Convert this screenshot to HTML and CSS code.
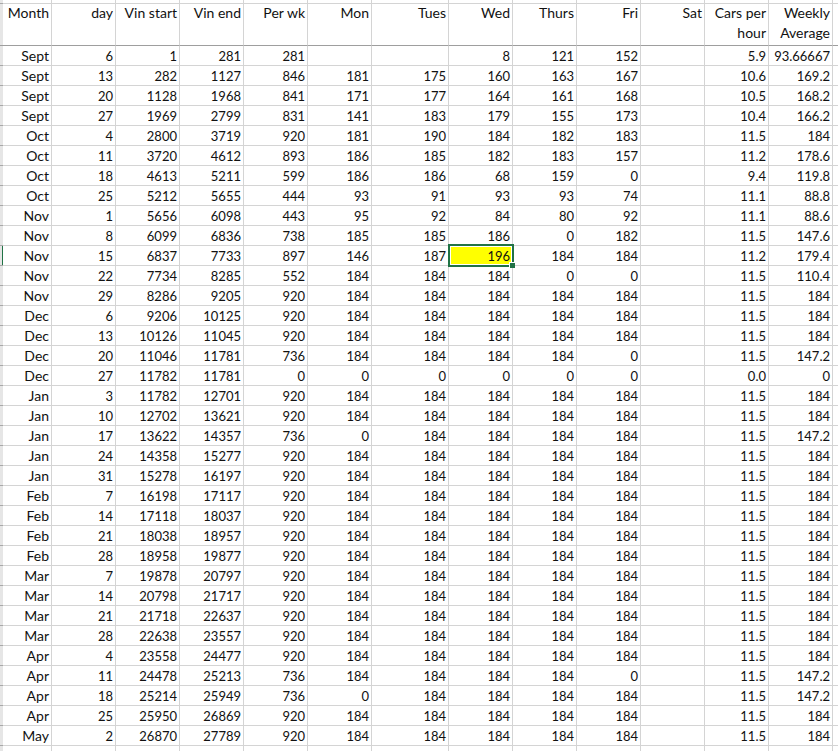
FILE: index.html
```html
<!DOCTYPE html>
<html lang="en">
<head>
<meta charset="utf-8">
<title>Weekly production sheet</title>
<link rel="stylesheet" href="styles.css">
</head>
<body>
<table class="sheet">
<colgroup><col class="c-strip"><col class="c-month"><col class="c-std"><col class="c-std"><col class="c-std"><col class="c-std"><col class="c-std"><col class="c-tues"><col class="c-std"><col class="c-std"><col class="c-std"><col class="c-std"><col class="c-std"><col class="c-std"><col class="c-rest"></colgroup>
<tr class="cap"><th class="strip"></th><th></th><th></th><th></th><th></th><th></th><th></th><th></th><th></th><th></th><th></th><th></th><th></th><th></th><th class="rest"></th></tr>
<tr class="head"><th class="strip"></th><th><div class="label">Month</div></th><th><div class="label">day</div></th><th><div class="label">Vin start</div></th><th><div class="label">Vin end</div></th><th><div class="label">Per wk</div></th><th><div class="label">Mon</div></th><th><div class="label">Tues</div></th><th><div class="label">Wed</div></th><th><div class="label">Thurs</div></th><th><div class="label">Fri</div></th><th><div class="label">Sat</div></th><th><div class="label">Cars per hour</div></th><th><div class="label">Weekly Average</div></th><th class="rest"></th></tr>
<tr><td class="strip"></td><td>Sept</td><td>6</td><td>1</td><td>281</td><td>281</td><td></td><td></td><td>8</td><td>121</td><td>152</td><td></td><td>5.9</td><td>93.66667</td><td class="rest"></td></tr>
<tr><td class="strip"></td><td>Sept</td><td>13</td><td>282</td><td>1127</td><td>846</td><td>181</td><td>175</td><td>160</td><td>163</td><td>167</td><td></td><td>10.6</td><td>169.2</td><td class="rest"></td></tr>
<tr><td class="strip"></td><td>Sept</td><td>20</td><td>1128</td><td>1968</td><td>841</td><td>171</td><td>177</td><td>164</td><td>161</td><td>168</td><td></td><td>10.5</td><td>168.2</td><td class="rest"></td></tr>
<tr><td class="strip"></td><td>Sept</td><td>27</td><td>1969</td><td>2799</td><td>831</td><td>141</td><td>183</td><td>179</td><td>155</td><td>173</td><td></td><td>10.4</td><td>166.2</td><td class="rest"></td></tr>
<tr><td class="strip"></td><td>Oct</td><td>4</td><td>2800</td><td>3719</td><td>920</td><td>181</td><td>190</td><td>184</td><td>182</td><td>183</td><td></td><td>11.5</td><td>184</td><td class="rest"></td></tr>
<tr><td class="strip"></td><td>Oct</td><td>11</td><td>3720</td><td>4612</td><td>893</td><td>186</td><td>185</td><td>182</td><td>183</td><td>157</td><td></td><td>11.2</td><td>178.6</td><td class="rest"></td></tr>
<tr><td class="strip"></td><td>Oct</td><td>18</td><td>4613</td><td>5211</td><td>599</td><td>186</td><td>186</td><td>68</td><td>159</td><td>0</td><td></td><td>9.4</td><td>119.8</td><td class="rest"></td></tr>
<tr><td class="strip"></td><td>Oct</td><td>25</td><td>5212</td><td>5655</td><td>444</td><td>93</td><td>91</td><td>93</td><td>93</td><td>74</td><td></td><td>11.1</td><td>88.8</td><td class="rest"></td></tr>
<tr><td class="strip"></td><td>Nov</td><td>1</td><td>5656</td><td>6098</td><td>443</td><td>95</td><td>92</td><td>84</td><td>80</td><td>92</td><td></td><td>11.1</td><td>88.6</td><td class="rest"></td></tr>
<tr><td class="strip"></td><td>Nov</td><td>8</td><td>6099</td><td>6836</td><td>738</td><td>185</td><td>185</td><td>186</td><td>0</td><td>182</td><td></td><td>11.5</td><td>147.6</td><td class="rest"></td></tr>
<tr><td class="strip active"></td><td>Nov</td><td>15</td><td>6837</td><td>7733</td><td>897</td><td>146</td><td>187</td><td class="selected">196</td><td>184</td><td>184</td><td></td><td>11.2</td><td>179.4</td><td class="rest"></td></tr>
<tr><td class="strip"></td><td>Nov</td><td>22</td><td>7734</td><td>8285</td><td>552</td><td>184</td><td>184</td><td>184</td><td>0</td><td>0</td><td></td><td>11.5</td><td>110.4</td><td class="rest"></td></tr>
<tr><td class="strip"></td><td>Nov</td><td>29</td><td>8286</td><td>9205</td><td>920</td><td>184</td><td>184</td><td>184</td><td>184</td><td>184</td><td></td><td>11.5</td><td>184</td><td class="rest"></td></tr>
<tr><td class="strip"></td><td>Dec</td><td>6</td><td>9206</td><td>10125</td><td>920</td><td>184</td><td>184</td><td>184</td><td>184</td><td>184</td><td></td><td>11.5</td><td>184</td><td class="rest"></td></tr>
<tr><td class="strip"></td><td>Dec</td><td>13</td><td>10126</td><td>11045</td><td>920</td><td>184</td><td>184</td><td>184</td><td>184</td><td>184</td><td></td><td>11.5</td><td>184</td><td class="rest"></td></tr>
<tr><td class="strip"></td><td>Dec</td><td>20</td><td>11046</td><td>11781</td><td>736</td><td>184</td><td>184</td><td>184</td><td>184</td><td>0</td><td></td><td>11.5</td><td>147.2</td><td class="rest"></td></tr>
<tr><td class="strip"></td><td>Dec</td><td>27</td><td>11782</td><td>11781</td><td>0</td><td>0</td><td>0</td><td>0</td><td>0</td><td>0</td><td></td><td>0.0</td><td>0</td><td class="rest"></td></tr>
<tr><td class="strip"></td><td>Jan</td><td>3</td><td>11782</td><td>12701</td><td>920</td><td>184</td><td>184</td><td>184</td><td>184</td><td>184</td><td></td><td>11.5</td><td>184</td><td class="rest"></td></tr>
<tr><td class="strip"></td><td>Jan</td><td>10</td><td>12702</td><td>13621</td><td>920</td><td>184</td><td>184</td><td>184</td><td>184</td><td>184</td><td></td><td>11.5</td><td>184</td><td class="rest"></td></tr>
<tr><td class="strip"></td><td>Jan</td><td>17</td><td>13622</td><td>14357</td><td>736</td><td>0</td><td>184</td><td>184</td><td>184</td><td>184</td><td></td><td>11.5</td><td>147.2</td><td class="rest"></td></tr>
<tr><td class="strip"></td><td>Jan</td><td>24</td><td>14358</td><td>15277</td><td>920</td><td>184</td><td>184</td><td>184</td><td>184</td><td>184</td><td></td><td>11.5</td><td>184</td><td class="rest"></td></tr>
<tr><td class="strip"></td><td>Jan</td><td>31</td><td>15278</td><td>16197</td><td>920</td><td>184</td><td>184</td><td>184</td><td>184</td><td>184</td><td></td><td>11.5</td><td>184</td><td class="rest"></td></tr>
<tr><td class="strip"></td><td>Feb</td><td>7</td><td>16198</td><td>17117</td><td>920</td><td>184</td><td>184</td><td>184</td><td>184</td><td>184</td><td></td><td>11.5</td><td>184</td><td class="rest"></td></tr>
<tr><td class="strip"></td><td>Feb</td><td>14</td><td>17118</td><td>18037</td><td>920</td><td>184</td><td>184</td><td>184</td><td>184</td><td>184</td><td></td><td>11.5</td><td>184</td><td class="rest"></td></tr>
<tr><td class="strip"></td><td>Feb</td><td>21</td><td>18038</td><td>18957</td><td>920</td><td>184</td><td>184</td><td>184</td><td>184</td><td>184</td><td></td><td>11.5</td><td>184</td><td class="rest"></td></tr>
<tr><td class="strip"></td><td>Feb</td><td>28</td><td>18958</td><td>19877</td><td>920</td><td>184</td><td>184</td><td>184</td><td>184</td><td>184</td><td></td><td>11.5</td><td>184</td><td class="rest"></td></tr>
<tr><td class="strip"></td><td>Mar</td><td>7</td><td>19878</td><td>20797</td><td>920</td><td>184</td><td>184</td><td>184</td><td>184</td><td>184</td><td></td><td>11.5</td><td>184</td><td class="rest"></td></tr>
<tr><td class="strip"></td><td>Mar</td><td>14</td><td>20798</td><td>21717</td><td>920</td><td>184</td><td>184</td><td>184</td><td>184</td><td>184</td><td></td><td>11.5</td><td>184</td><td class="rest"></td></tr>
<tr><td class="strip"></td><td>Mar</td><td>21</td><td>21718</td><td>22637</td><td>920</td><td>184</td><td>184</td><td>184</td><td>184</td><td>184</td><td></td><td>11.5</td><td>184</td><td class="rest"></td></tr>
<tr><td class="strip"></td><td>Mar</td><td>28</td><td>22638</td><td>23557</td><td>920</td><td>184</td><td>184</td><td>184</td><td>184</td><td>184</td><td></td><td>11.5</td><td>184</td><td class="rest"></td></tr>
<tr><td class="strip"></td><td>Apr</td><td>4</td><td>23558</td><td>24477</td><td>920</td><td>184</td><td>184</td><td>184</td><td>184</td><td>184</td><td></td><td>11.5</td><td>184</td><td class="rest"></td></tr>
<tr><td class="strip"></td><td>Apr</td><td>11</td><td>24478</td><td>25213</td><td>736</td><td>184</td><td>184</td><td>184</td><td>184</td><td>0</td><td></td><td>11.5</td><td>147.2</td><td class="rest"></td></tr>
<tr><td class="strip"></td><td>Apr</td><td>18</td><td>25214</td><td>25949</td><td>736</td><td>0</td><td>184</td><td>184</td><td>184</td><td>184</td><td></td><td>11.5</td><td>147.2</td><td class="rest"></td></tr>
<tr><td class="strip"></td><td>Apr</td><td>25</td><td>25950</td><td>26869</td><td>920</td><td>184</td><td>184</td><td>184</td><td>184</td><td>184</td><td></td><td>11.5</td><td>184</td><td class="rest"></td></tr>
<tr><td class="strip"></td><td>May</td><td>2</td><td>26870</td><td>27789</td><td>920</td><td>184</td><td>184</td><td>184</td><td>184</td><td>184</td><td></td><td>11.5</td><td>184</td><td class="rest"></td></tr>
<tr class="tail"><td class="strip"></td><td></td><td></td><td></td><td></td><td></td><td></td><td></td><td></td><td></td><td></td><td></td><td></td><td></td><td class="rest"></td></tr>
</table>
</body>
</html>
```

FILE: styles.css
```css
html, body {
  margin: 0;
  padding: 0;
  background: #fff;
  overflow: hidden;
  height: 751px;
}

.sheet {
  table-layout: fixed;
  width: 838px;
  border-collapse: separate;
  border-spacing: 0;
  font-family: Lato, "Open Sans", "Liberation Sans", sans-serif;
  font-size: 13px;
  font-weight: 400;
  color: #111;
}

.c-strip { width: 3px; }
.c-month { width: 49px; }
.c-std { width: 64px; }
.c-tues { width: 77px; }
.c-rest { width: 5px; }

.sheet th,
.sheet td {
  box-sizing: border-box;
  padding: 1px 2px 0 1px;
  height: 20px;
  line-height: 18px;
  text-align: right;
  font-weight: 400;
  vertical-align: middle;
  border-right: 1px solid #d4d4d4;
  border-bottom: 1px solid #d4d4d4;
  white-space: nowrap;
  overflow: hidden;
}

.sheet td:nth-child(2) {
  font-size: 14px;
}

.sheet .cap th {
  height: 4px;
  line-height: 0;
  padding: 0;
}

.sheet .head th {
  height: 42px;
  padding-top: 0;
  font-size: 14px;
  line-height: 20px;
  vertical-align: top;
  white-space: normal;
  border-bottom: 1px solid #9e9e9e;
}

.label {
  margin-top: -1px;
}

.sheet .strip {
  padding: 0;
  background: #e6e6e6;
  border-right: 0;
  border-bottom: 1px solid #a8a8a8;
}

.sheet .strip.active {
  background: linear-gradient(to right, #e6e6e6 0 2px, #217346 2px);
}

.sheet .rest {
  padding: 0;
  border-right: 0;
}

.sheet .tail td { height: 6px; line-height: 0; border-bottom: 0; padding: 0; }
.sheet .tail .rest { border-right: 0; }

.sheet .selected {
  position: relative;
  background: #ffff00;
  overflow: visible;
}

.sheet .selected::before {
  content: "";
  position: absolute;
  left: -1px;
  top: -2px;
  right: -2px;
  bottom: -2px;
  border: 2px solid #217346;
  box-shadow: inset 0 0 0 1px #fff;
  pointer-events: none;
}

.sheet .selected::after {
  content: "";
  position: absolute;
  right: -3px;
  bottom: -3px;
  width: 5px;
  height: 5px;
  background: #217346;
  border: 1px solid #fff;
  border-width: 1px 0 0 1px;
}
```
